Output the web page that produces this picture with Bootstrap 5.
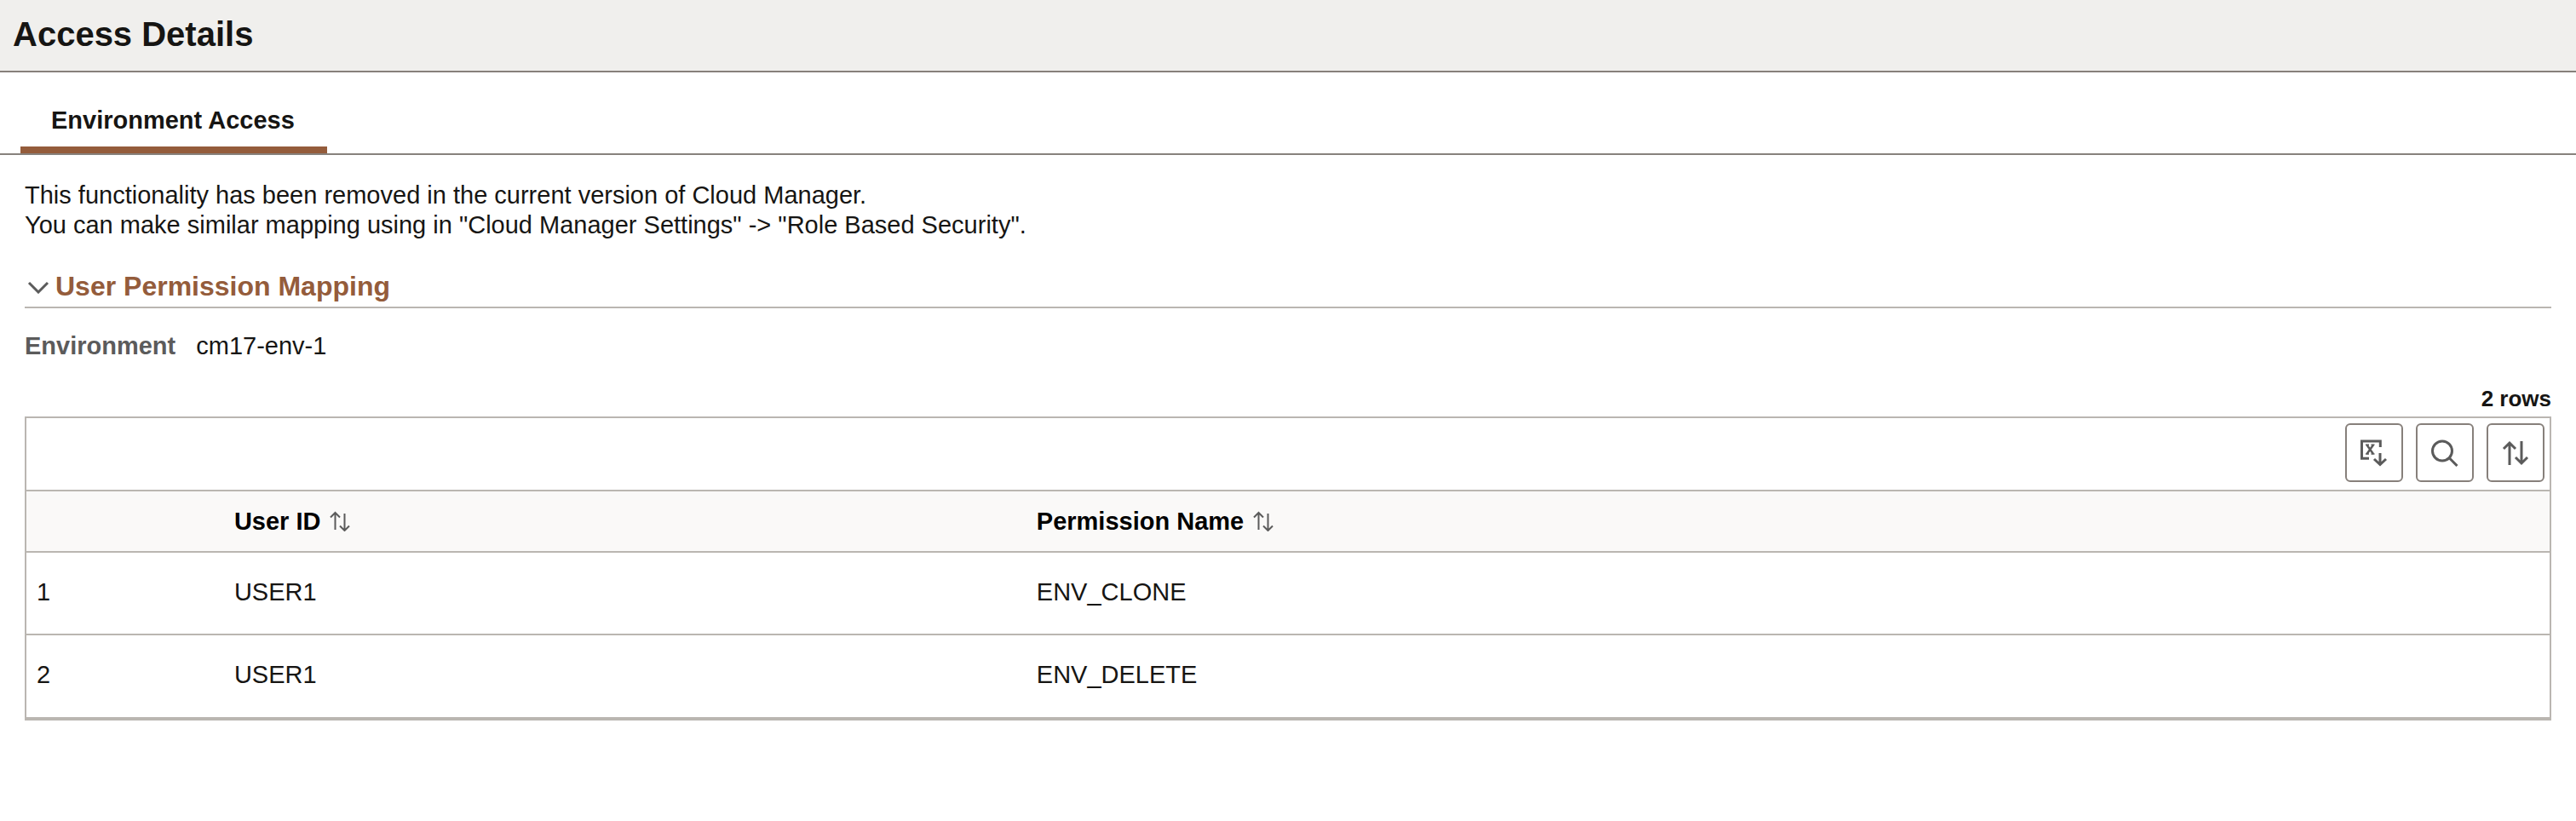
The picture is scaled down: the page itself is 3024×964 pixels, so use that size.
<!DOCTYPE html>
<html lang="en">
<head>
<meta charset="utf-8">
<meta name="viewport" content="width=device-width, initial-scale=1">
<title>Access Details</title>
<link href="https://cdn.jsdelivr.net/npm/bootstrap@5.3.0/dist/css/bootstrap.min.css" rel="stylesheet">
<style>
  :root { --ink: #161513; --line: #bab6b1; --line-dark: #87807b; --brand: #945c3b; --icon: #5b5b5b; }
  body { font-family: "Liberation Sans", Arial, sans-serif; font-size: 29px; line-height: 35px; color: var(--ink); }
  .page-head { background: #f0efed; border-bottom: 2px solid var(--line-dark); padding: 16px 15px 19px; }
  .page-head h1 { font-size: 40px; line-height: 48px; }
  .page-tabs { border-bottom: 2px solid #87827d; padding: 36px 24px 0; }
  .page-tabs .nav-link { color: var(--ink); padding: 3px 38px 13px 36px; line-height: 35px; border: 0; border-bottom: 8px solid var(--brand); border-radius: 0; }
  .page-body { padding: 30px 29px 0; }
  .section-head { border-bottom: 2px solid var(--line); margin-top: 35px; padding-bottom: 5px; }
  .section-head h2 { font-size: 32px; line-height: 38px; }
  .section-toggle { color: var(--brand); gap: 7px; padding-left: 3px; }
  .env-row { gap: 24px; margin-top: 27px; }
  .env-label { color: var(--icon); }
  .row-count { font-size: 26px; line-height: 30px; margin-top: 29px; }
  .grid-box { border: 2px solid var(--line); border-bottom-width: 4px; margin-top: 6px; }
  .grid-tools { gap: 15px; padding: 6px 6px 9px; }
  .tool-btn { width: 68px; height: 69px; border: 2px solid var(--line-dark); border-radius: 6px; background: #fff; }
  .grid-table { table-layout: fixed; border-color: var(--line); --bs-table-color: var(--ink); }
  .grid-table th, .grid-table td { padding: 0 12px; border-width: 2px 0 0; }
  .grid-table thead th { height: 72px; background: #faf9f8; color: #000; }
  .grid-table td { height: 97px; padding-bottom: 3px; }
  .col-num { width: 7.83%; }
  .col-user { width: 31.8%; }
  .sort-btn { gap: 11px; color: #000; }
  svg { display: block; fill: none; stroke: var(--icon); }
</style>
</head>
<body>
<header class="page-head"><h1 class="fw-bold mb-0">Access Details</h1></header>
<nav class="page-tabs nav">
  <a class="nav-link fw-bold active" aria-current="page" href="#access">Environment Access</a>
</nav>
<main class="page-body" id="access">
  <p class="mb-0">This functionality has been removed in the current version of Cloud Manager.<br>You can make similar mapping using in "Cloud Manager Settings" -&gt; "Role Based Security".</p>
  <div class="section-head">
    <h2 class="fw-bold mb-0">
      <button class="section-toggle d-flex align-items-center bg-transparent border-0 py-0 pe-0 fw-bold" type="button" data-bs-toggle="collapse" data-bs-target="#mapping" aria-expanded="true" aria-controls="mapping">
        <svg width="26" height="18" viewBox="0 0 26 18" stroke-width="3"><path d="M2 5 13 16 24 5"/></svg>
        User Permission Mapping
      </button>
    </h2>
  </div>
  <section class="collapse show" id="mapping">
    <div class="env-row d-flex">
      <span class="env-label fw-bold">Environment</span>
      <span>cm17-env-1</span>
    </div>
    <div class="row-count fw-bold text-end">2 rows</div>
    <div class="grid-box">
      <div class="grid-tools d-flex justify-content-end">
        <button class="tool-btn d-flex align-items-center justify-content-center p-0" type="button" aria-label="Download to spreadsheet">
          <svg width="32" height="32" viewBox="0 0 32 32" stroke-width="3"><path d="M23.300 9V2H1.500V22.300H10"/><path d="M7.500 6.500 15 17M15 6.500 7.500 17" stroke-width="2.500"/><path d="M6 6.300h4M12.500 6.300h4M6 17h4M12.500 17h4" stroke-width="1.500"/><path d="M23 16V29M16 23l7 6.500 7-6.500"/></svg>
        </button>
        <button class="tool-btn d-flex align-items-center justify-content-center p-0" type="button" aria-label="Find">
          <svg width="32" height="32" viewBox="0 0 32 32" stroke-width="3"><circle cx="13" cy="13.500" r="11.500"/><path d="M21 21.500 30.500 31"/></svg>
        </button>
        <button class="tool-btn d-flex align-items-center justify-content-center p-0" type="button" aria-label="Sort">
          <svg width="32" height="32" viewBox="0 0 32 32" stroke-width="3"><path d="M9 30V4M2 11 9 4l7 7M23 2v26M16 21l7 7 7-7"/></svg>
        </button>
      </div>
      <table class="grid-table table align-middle mb-0">
        <thead class="align-middle">
          <tr>
            <th class="col-num" scope="col"></th>
            <th class="col-user" scope="col"><button class="sort-btn d-flex align-items-center bg-transparent border-0 p-0 fw-bold" type="button">User ID
              <svg width="24" height="24" viewBox="0 0 24 24" stroke-width="2"><path d="M6.500 22V2M1 7.500 6.500 2 12 7.500M17.500 3v20M12 17.500 17.500 23l5.500-5.500"/></svg></button></th>
            <th scope="col"><button class="sort-btn d-flex align-items-center bg-transparent border-0 p-0 fw-bold" type="button">Permission Name
              <svg width="24" height="24" viewBox="0 0 24 24" stroke-width="2"><path d="M6.500 22V2M1 7.500 6.500 2 12 7.500M17.500 3v20M12 17.500 17.500 23l5.500-5.500"/></svg></button></th>
          </tr>
        </thead>
        <tbody>
          <tr><td>1</td><td>USER1</td><td>ENV_CLONE</td></tr>
          <tr><td>2</td><td>USER1</td><td>ENV_DELETE</td></tr>
        </tbody>
      </table>
    </div>
  </section>
</main>
<script src="https://cdn.jsdelivr.net/npm/bootstrap@5.3.0/dist/js/bootstrap.bundle.min.js"></script>
</body>
</html>
